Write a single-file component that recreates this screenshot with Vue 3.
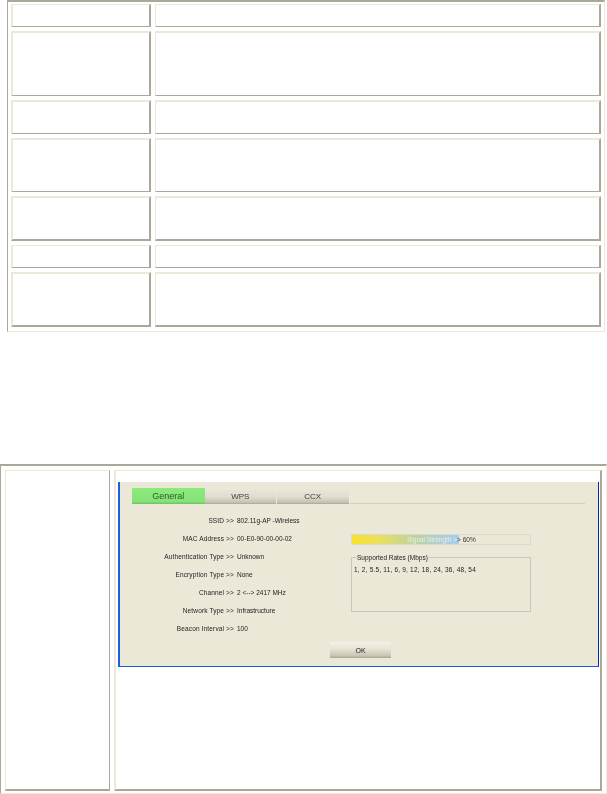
<script setup>
const rows = [
  { id: 1, top: 'thin', bottom: 'thin' },
  { id: 2, top: 'thick', bottom: 'thin' },
  { id: 3, top: 'thick', bottom: 'thin' },
  { id: 4, top: 'thick', bottom: 'thin' },
  { id: 5, top: 'thick', bottom: 'thick' },
  { id: 6, top: 'thin', bottom: 'thin' },
  { id: 7, top: 'thick', bottom: 'thick' }
]
const tabs = ['General', 'WPS', 'CCX']
const fields = [
  ['SSID >>', '802.11g-AP -Wireless'],
  ['MAC Address >>', '00-E0-90-00-00-02'],
  ['Authentication Type >>', 'Unknown'],
  ['Encryption Type >>', 'None'],
  ['Channel >>', '2 <--> 2417 MHz'],
  ['Network Type >>', 'Infrastructure'],
  ['Beacon Interval >>', '100']
]
</script>

<template>
  <main class="page">
    <section class="spec-table">
      <template v-for="row in rows" :key="row.id">
        <div class="cell cell-first" :class="['top-' + row.top, 'bottom-' + row.bottom]"></div>
        <div class="cell cell-second" :class="['bottom-' + row.bottom, 'top-' + row.top]"></div>
      </template>
    </section>

    <section class="shot-table">
      <div class="shot-label"></div>
      <div class="shot-cell">
        <div class="dialog">
          <div class="tabs">
            <div v-for="(tab, i) in tabs" :key="tab" class="tab" :class="{ active: i === 0 }">
              <span>{{ tab }}</span>
            </div>
          </div>
          <div class="body">
            <div class="form">
              <template v-for="f in fields" :key="f[0]">
                <span class="label">{{ f[0] }}</span>
                <span class="value">{{ f[1] }}</span>
              </template>
            </div>
            <div class="side">
              <div class="signal">
                <span class="signal-on">Signal Strength &gt;</span><span class="signal-off">&gt; 60%</span>
              </div>
              <div class="group">
                <span class="legend">Supported Rates (Mbps)</span>
                <span class="rates">1, 2, 5.5, 11, 6, 9, 12, 18, 24, 36, 48, 54</span>
              </div>
            </div>
          </div>
          <button class="ok" type="button"><span>OK</span></button>
        </div>
      </div>
    </section>
  </main>
</template>

<style>
html, body { margin: 0; background: #fff; }
</style>

<style scoped>
.page {
  width: 607px;
  height: 794px;
  overflow: hidden;
  background: #fff;
  font-family: "Liberation Sans", Arial, sans-serif;
}
.spec-table {
  box-sizing: border-box;
  width: 598px;
  height: 332px;
  margin-left: 7px;
  padding: 2px 3px 0 3px;
  display: grid;
  grid-template-columns: 140px 446px;
  grid-template-rows: 23px 65px 34px 54px 45px 23px 55px;
  gap: 4px;
  border-left: 1px solid #aca899;
  border-top: 2px solid #aca899;
  border-right: 1px solid #ece9d8;
  border-bottom: 1px solid #ece9d8;
}
.cell {
  box-sizing: border-box;
  border-style: solid;
  border-color: #ece9d8 #aca899 #aca899 #ece9d8;
  border-right-width: 2px;
}
.cell-first { border-left-width: 2px; }
.cell-second { border-left-width: 1px; }
.top-thin { border-top-width: 1px; }
.top-thick { border-top-width: 2px; }
.bottom-thin { border-bottom-width: 1px; }
.bottom-thick { border-bottom-width: 2px; }

.shot-table {
  box-sizing: border-box;
  width: 607px;
  height: 330px;
  margin-top: 132px;
  padding: 4px 3px 0 4px;
  display: grid;
  grid-template-columns: 105px 488px;
  grid-template-rows: 321px;
  gap: 4px;
  border-left: 1px solid #aca899;
  border-top: 2px solid #aca899;
  border-right: 1px solid #f2f0e6;
  border-bottom: 1px solid #ece9d8;
}
.shot-label {
  box-sizing: border-box;
  border-style: solid;
  border-color: #ece9d8 #aca899 #aca899 #ece9d8;
  border-width: 1px 1px 2px 1px;
}
.shot-cell {
  box-sizing: border-box;
  padding: 11px 2px 0 2px;
  border-style: solid;
  border-color: #ece9d8 #aca899 #aca899 #ece9d8;
  border-width: 1px 2px 2px 2px;
}
.dialog {
  box-sizing: border-box;
  width: 481px;
  padding: 6px 0 8px 12px;
  display: flex;
  flex-direction: column;
  background: #ebe8d8;
  border-left: 2px solid #1a5fe6;
  border-right: 1px solid #0b2ba6;
  border-bottom: 1px solid #1a5adc;
  filter: blur(0.35px);
}
.tabs {
  display: flex;
  width: 453px;
  height: 16px;
  border-bottom: 1px solid #d2cfbf;
  box-sizing: border-box;
}
.tab {
  box-sizing: border-box;
  width: 72.5px;
  height: 16px;
  display: flex;
  align-items: center;
  justify-content: center;
  font-size: 8px;
  color: #3c3c34;
  border-right: 1px solid #ebe8d8;
  background: linear-gradient(#ebe8dc, #e0ddcf 55%, #c6c2b1 90%, #a9a594);
}
.tab.active {
  color: #2f5a2a;
  font-size: 9px;
  border-right: 0;
  background: linear-gradient(#8ce97c, #86e276 85%, #6fc062);
}
.body {
  display: flex;
  margin-left: -12px;
  padding-top: 8px;
}
.form {
  width: 231px;
  display: grid;
  grid-template-columns: 114px 114px;
  grid-auto-rows: 18px;
  column-gap: 3px;
  align-items: center;
  font-size: 6.5px;
  line-height: 18px;
  color: #222;
  white-space: nowrap;
}
.label {
  text-align: right;
  letter-spacing: 0.15px;
}
.side {
  width: 180px;
  padding-top: 22px;
  font-size: 6.5px;
  color: #222;
  white-space: nowrap;
}
.signal {
  box-sizing: border-box;
  height: 11px;
  padding-left: 55px;
  display: flex;
  align-items: center;
  border: 1px solid #dcd9ca;
  background: linear-gradient(90deg, #f8e22a, #ebe05e 25%, #bcd2a4 60%, #a6cdf2) no-repeat 0 0 / 107px 100%;
}
.signal-on { color: #e8eee8; }
.signal-off { color: #333; }
.group {
  box-sizing: border-box;
  height: 55px;
  margin-top: 12px;
  padding-left: 2px;
  display: flex;
  flex-direction: column;
  align-items: flex-start;
  border: 1px solid #c9c6ba;
}
.legend {
  margin: -4px 0 0 2px;
  padding: 0 1px;
  line-height: 8px;
  background: #ebe8d8;
}
.rates {
  margin-top: 4px;
  line-height: 8px;
  letter-spacing: 0.2px;
}
.ok {
  width: 61px;
  height: 16px;
  margin: 4px 0 0 198px;
  padding: 0;
  border: 0;
  font: 7px "Liberation Sans", Arial, sans-serif;
  color: #222;
  background: linear-gradient(#f3f1e8, #e6e3d5 45%, #c8c5b4 85%, #a8a595);
}
</style>
